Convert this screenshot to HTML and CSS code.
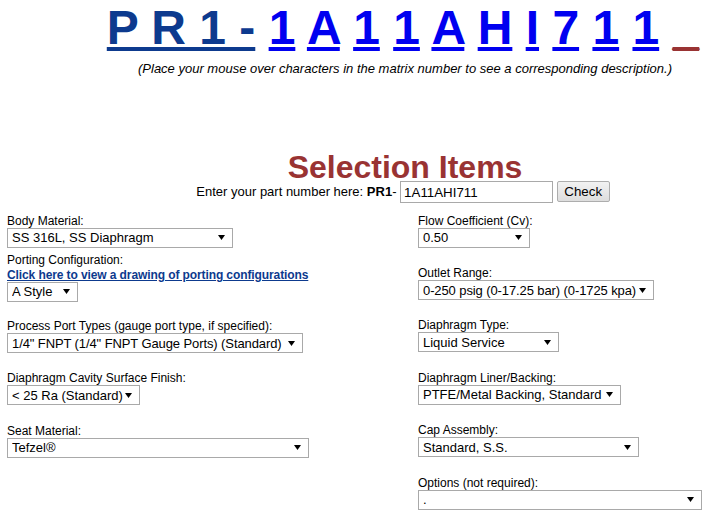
FILE: index.html
```html
<!DOCTYPE html>
<html lang="en">
<head>
  <meta charset="UTF-8">
  <meta name="viewport" content="width=device-width, initial-scale=1.0">
  <title>Selection Items</title>
  <link rel="stylesheet" href="styles.css">
</head>
<body>
  <div class="top">
    <div class="matrix">
      <a href="#" class="base">P R 1 -</a>
      <a href="#" class="ch">1</a>
      <a href="#" class="ch">A</a>
      <a href="#" class="ch">1</a>
      <a href="#" class="ch">1</a>
      <a href="#" class="ch">A</a>
      <a href="#" class="ch">H</a>
      <a href="#" class="ch">I</a>
      <a href="#" class="ch">7</a>
      <a href="#" class="ch">1</a>
      <a href="#" class="ch">1</a>
      <a href="#" class="open">_</a>
    </div>
    <p class="hint">(Place your mouse over characters in the matrix number to see a corresponding description.)</p>

    <h1 class="title">Selection Items</h1>
    <div class="partline">
      Enter your part number here: <b>PR1</b>- <input type="text" class="partno" value="1A11AHI711"> <button class="check">Check</button>
    </div>
  </div>

  <div class="cols">
    <div class="col">
      <div class="field tight">
        <label>Body Material:</label>
        <select class="sel-body"><option>SS 316L, SS Diaphragm</option></select>
      </div>
      <div class="field porting">
        <label>Porting Configuration:</label>
        <a href="#" class="drawing">Click here to view a drawing of porting configurations</a>
        <select class="sel-style"><option>A Style</option></select>
      </div>
      <div class="field">
        <label>Process Port Types (gauge port type, if specified):</label>
        <select class="sel-port"><option>1/4" FNPT (1/4" FNPT Gauge Ports) (Standard)</option></select>
      </div>
      <div class="field">
        <label>Diaphragm Cavity Surface Finish:</label>
        <select class="sel-finish"><option>&lt; 25 Ra (Standard)</option></select>
      </div>
      <div class="field">
        <label>Seat Material:</label>
        <select class="sel-seat"><option>Tefzel®</option></select>
      </div>
    </div>

    <div class="col">
      <div class="field">
        <label>Flow Coefficient (Cv):</label>
        <select class="sel-cv"><option>0.50</option></select>
      </div>
      <div class="field">
        <label>Outlet Range:</label>
        <select class="sel-range"><option>0-250 psig (0-17.25 bar) (0-1725 kpa)</option></select>
      </div>
      <div class="field">
        <label>Diaphragm Type:</label>
        <select class="sel-type"><option>Liquid Service</option></select>
      </div>
      <div class="field">
        <label>Diaphragm Liner/Backing:</label>
        <select class="sel-liner"><option>PTFE/Metal Backing, Standard</option></select>
      </div>
      <div class="field">
        <label>Cap Assembly:</label>
        <select class="sel-cap"><option>Standard, S.S.</option></select>
      </div>
      <div class="field">
        <label>Options (not required):</label>
        <select class="sel-options"><option>.</option></select>
      </div>
    </div>
  </div>
</body>
</html>
```

FILE: styles.css
```css
body {
  margin: 0 7px;
  font-family: "Liberation Sans", Arial, sans-serif;
  font-size: 12px;
  color: #000;
  background: #fff;
}
.top {
  padding-left: 94px;
  text-align: center;
}
.matrix {
  margin-left: -4px;
  font-size: 48px;
  font-weight: bold;
  white-space: nowrap;
}
.matrix a {
  text-decoration: underline;
}
.matrix .base {
  color: #0d3a8e;
}
.matrix .ch {
  color: #0000f0;
}
.matrix .open {
  color: #993333;
}
.hint {
  margin: 6px 0 0;
  font-size: 13px;
  font-style: italic;
  line-height: 15px;
}
.title {
  margin: 77px 0 0;
  font-size: 32px;
  line-height: 28px;
  color: #993333;
}
.partline {
  margin-left: -4px;
  font-size: 13px;
  line-height: 22px;
  height: 22px;
}
.partno {
  box-sizing: border-box;
  width: 153px;
  height: 22px;
  margin: 0;
  padding: 0 3px;
  border: 1px solid #a9a9a9;
  font: 13.33px "Liberation Sans", Arial, sans-serif;
  vertical-align: top;
}
.check {
  box-sizing: border-box;
  width: 53px;
  height: 21px;
  margin: 0;
  padding: 0;
  border: 1px solid #adadad;
  border-radius: 2px;
  background: linear-gradient(#f2f2f2, #dddddd);
  font: 13.33px "Liberation Sans", Arial, sans-serif;
  color: #000;
  vertical-align: top;
}
.cols {
  display: grid;
  grid-template-columns: 411px 1fr;
  margin-top: 8.7px;
}
.field {
  margin-bottom: 16.4px;
}
.field.tight {
  margin-bottom: 3px;
}
.field.porting {
  margin-bottom: 15.4px;
}
label {
  display: block;
  padding-top: 3px;
  line-height: 13px;
}
.drawing {
  display: block;
  padding-top: 2px;
  line-height: 13px;
  font-weight: bold;
  letter-spacing: -0.1px;
  color: #0d3a8e;
}
select {
  display: block;
  box-sizing: border-box;
  height: 20px;
  padding: 0 13px 0 4px;
  border: 1px solid #a9a9a9;
  border-radius: 0;
  font: 13px "Liberation Sans", Arial, sans-serif;
  color: #000;
  -webkit-appearance: none;
  appearance: none;
  background: #fff url("data:image/svg+xml,%3Csvg xmlns='http://www.w3.org/2000/svg' width='7' height='5'%3E%3Cpath d='M0 0h7L3.5 5z' fill='%23000'/%3E%3C/svg%3E") no-repeat right 7px center;
}
.sel-body { width: 226px; }
.sel-style { width: 71px; }
.sel-port { width: 296px; }
.sel-finish { width: 133px; }
.sel-seat { width: 302px; }
.sel-cv { width: 112px; }
.sel-range { width: 236px; }
.sel-type { width: 141px; }
.sel-liner { width: 203px; }
.sel-cap { width: 221px; }
.sel-options { width: 284px; }
.sel-range, .sel-port { letter-spacing: -0.1px; }
```
